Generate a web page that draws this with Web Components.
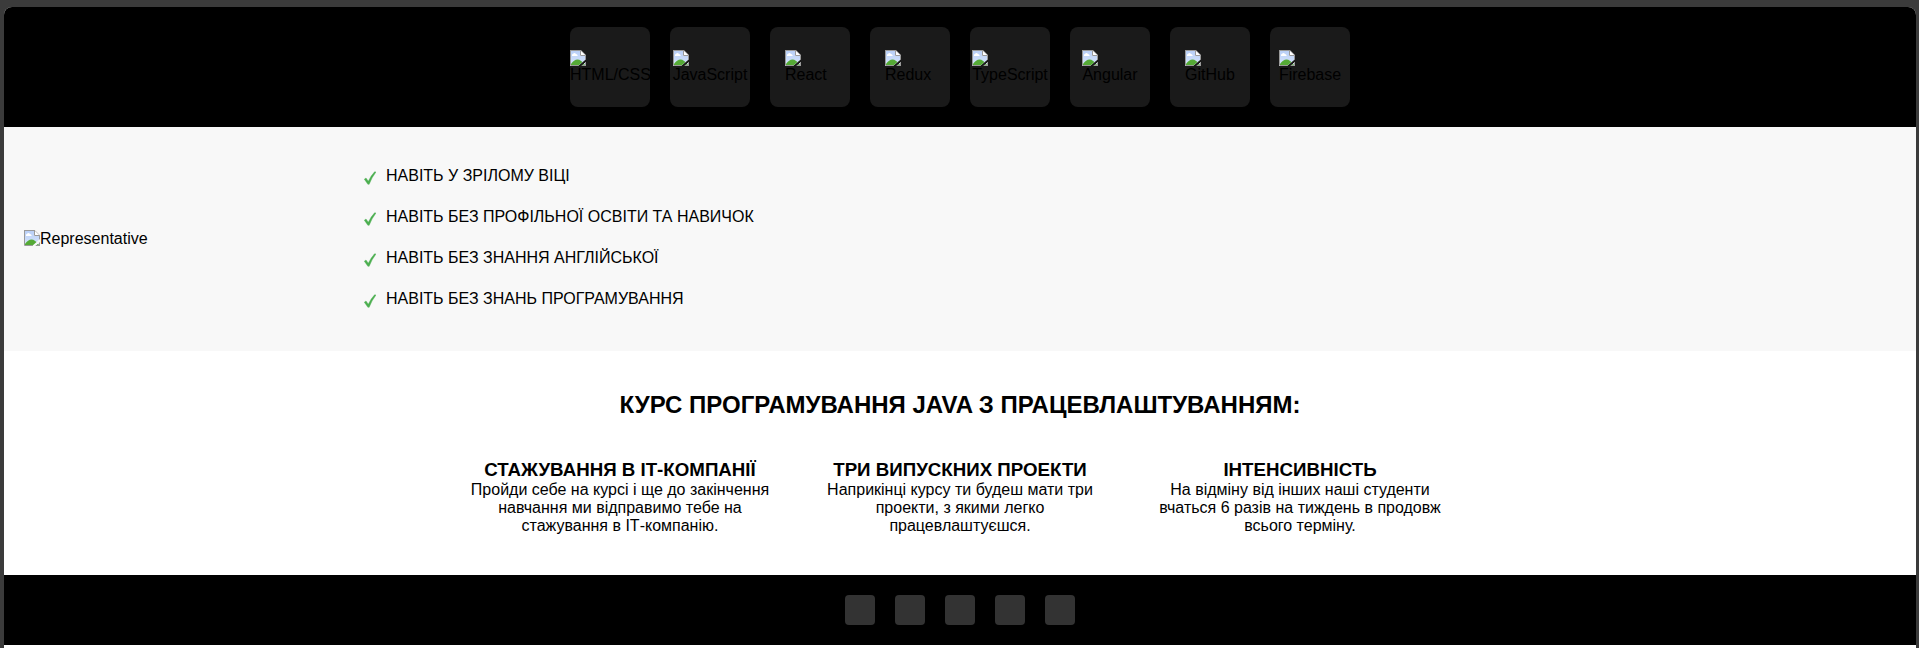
<!DOCTYPE html>
<html lang="uk">
<head>
<meta charset="utf-8">
<meta name="viewport" content="width=device-width, initial-scale=1">
<title>Курс програмування Java</title>
<style>
html { background: #3b3b3b; }
body { margin: 0; font: 16px/18px "Liberation Sans", Arial, sans-serif; color: #000; }
</style>
</head>
<body>
<course-page>
  <tech-strip>
    <tech-tile>HTML/CSS</tech-tile>
    <tech-tile>JavaScript</tech-tile>
    <tech-tile>React</tech-tile>
    <tech-tile>Redux</tech-tile>
    <tech-tile>TypeScript</tech-tile>
    <tech-tile>Angular</tech-tile>
    <tech-tile>GitHub</tech-tile>
    <tech-tile>Firebase</tech-tile>
  </tech-strip>
  <audience-section>
    <span slot="portrait">Representative</span>
    <check-item>НАВІТЬ У ЗРІЛОМУ ВІЦІ</check-item>
    <check-item>НАВІТЬ БЕЗ ПРОФІЛЬНОЇ ОСВІТИ ТА НАВИЧОК</check-item>
    <check-item>НАВІТЬ БЕЗ ЗНАННЯ АНГЛІЙСЬКОЇ</check-item>
    <check-item>НАВІТЬ БЕЗ ЗНАНЬ ПРОГРАМУВАННЯ</check-item>
  </audience-section>
  <benefits-section>
    <span slot="title">КУРС ПРОГРАМУВАННЯ JAVA З ПРАЦЕВЛАШТУВАННЯМ:</span>
    <benefit-card><span slot="title">СТАЖУВАННЯ В ІТ-КОМПАНІЇ</span>Пройди себе на курсі і ще до закінчення навчання ми відправимо тебе на стажування в ІТ-компанію.</benefit-card>
    <benefit-card><span slot="title">ТРИ ВИПУСКНИХ ПРОЕКТИ</span>Наприкінці курсу ти будеш мати три проекти, з якими легко працевлаштуєшся.</benefit-card>
    <benefit-card><span slot="title">ІНТЕНСИВНІСТЬ</span>На відміну від інших наші студенти вчаться 6 разів на тиждень в продовж всього терміну.</benefit-card>
  </benefits-section>
  <social-footer></social-footer>
</course-page>

<script>
const define = (name, html) => {
  const template = document.createElement('template');
  template.innerHTML = html;
  customElements.define(name, class extends HTMLElement {
    constructor() {
      super();
      this.attachShadow({ mode: 'open' }).append(template.content.cloneNode(true));
    }
  });
};

define('course-page', `
<style>
  :host { display: block; box-sizing: border-box; min-height: 100vh; padding: 7px 3px 0 4px; background: #3b3b3b; }
  main { display: flow-root; min-height: calc(100vh - 7px); border-radius: 8px 8px 0 0; overflow: hidden; background: #fff; }
</style>
<main><slot></slot></main>`);

define('missing-image', `
<style>
  :host { display: block; flex: none; width: 16px; height: 16px; }
  svg { display: block; }
</style>
<svg width="16" height="16" viewBox="0 0 16 16" aria-hidden="true">
  <defs>
    <linearGradient id="sky" x1="0" y1="0" x2="0" y2="1"><stop offset="0" stop-color="#b9cff7"/><stop offset="1" stop-color="#d6e4fb"/></linearGradient>
    <clipPath id="sheet"><path d="M0 0H11L16 5V9L8 16H0ZM16 12V16H11.5Z"/></clipPath>
  </defs>
  <g clip-path="url(#sheet)">
    <path d="M0 0H11L16 5V16H0Z" fill="#fff"/>
    <path d="M1 1H10V6H15V15H1Z" fill="url(#sky)"/>
    <path d="M2 6V5Q2 4 3 4Q4 2.500 5.500 3.500Q6 4 7 4.500Q8 5 7.500 6Z" fill="#fff"/>
    <path d="M1 15V14Q4 9.500 7.500 9.500Q11 9.500 15 15V16H1Z" fill="#55aa36"/>
    <path d="M0.500 0V15.500H16M15.500 16V5L11 0.500H0" fill="none" stroke="#9a9a9a"/>
    <path d="M10.500 1V5.500H15.500" fill="#fff" stroke="#9a9a9a"/>
  </g>
</svg>`);

define('tech-strip', `
<style>
  :host { display: flex; flex-wrap: wrap; justify-content: center; gap: 20px; padding: 20px; background: #000; }
</style>
<slot></slot>`);

define('tech-tile', `
<style>
  :host { display: flex; align-items: center; justify-content: center; width: 80px; height: 80px; border-radius: 8px; background: #1a1a1a; overflow: hidden; }
  div { min-width: 50px; }
</style>
<div><missing-image></missing-image><slot></slot></div>`);

define('audience-section', `
<style>
  :host { display: grid; grid-template-columns: 300px 1fr; column-gap: 40px; align-items: center; padding: 40px 20px 20px; background: #f8f8f8; }
  .portrait { display: flex; padding-bottom: 20px; }
</style>
<div class="portrait"><missing-image></missing-image><slot name="portrait"></slot></div>
<div role="list"><slot></slot></div>`);

define('check-item', `
<style>
  :host { display: flex; gap: 10px; margin-bottom: 20px; height: 21px; }
  svg { flex: none; margin-top: 4px; }
</style>
<svg width="12" height="14" viewBox="0 0 12 14" aria-hidden="true"><path d="M0.300 8.200L2 7L4.300 10.200Q7 4.500 10.600 0.800L12 1Q8 6 5.200 13.300H3.900Z" fill="#4caf50" stroke="#4caf50" stroke-width="0.400"/></svg>
<span role="listitem"><slot></slot></span>`);

define('benefits-section', `
<style>
  :host { display: block; padding: 40px 20px; text-align: center; background: #fff; }
  h2 { margin: 0 0 40px; font-size: 24px; line-height: 28px; }
  .cards { display: flex; flex-wrap: wrap; justify-content: center; gap: 40px; }
</style>
<h2><slot name="title"></slot></h2>
<div class="cards"><slot></slot></div>`);

define('benefit-card', `
<style>
  :host { display: block; width: 300px; }
  h3 { margin: 0; line-height: 22px; }
  p { margin: 0; }
</style>
<h3><slot name="title"></slot></h3>
<p><slot></slot></p>`);

define('social-footer', `
<style>
  :host { display: block; padding: 20px; background: #000; }
  nav { display: flex; justify-content: center; gap: 20px; }
  a { width: 30px; height: 30px; border-radius: 4px; background: #333; }
</style>
<nav>
  <a href="#facebook" aria-label="Facebook"></a>
  <a href="#instagram" aria-label="Instagram"></a>
  <a href="#telegram" aria-label="Telegram"></a>
  <a href="#youtube" aria-label="YouTube"></a>
  <a href="#linkedin" aria-label="LinkedIn"></a>
</nav>`);
</script>
</body>
</html>
